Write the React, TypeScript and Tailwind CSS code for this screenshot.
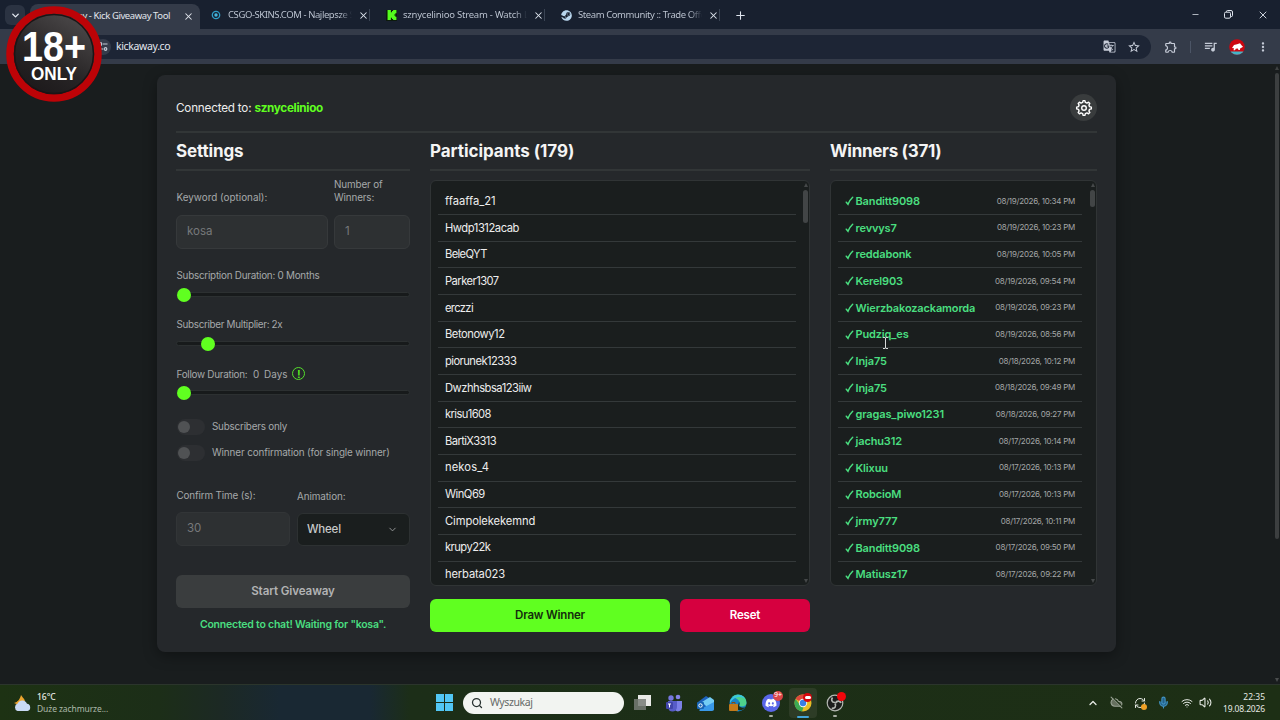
import React from "react";
import { ChevronDown, ChevronUp, CloudOff, Mic, Minus, Plus, RefreshCw, Search, Volume2, Wifi, X } from "lucide-react";
import { FaDiscord, FaSteam } from "react-icons/fa";
import { MdGTranslate, MdMoreVert, MdOutlineExtension, MdQueueMusic, MdStarBorder } from "react-icons/md";
import { SiKick } from "react-icons/si";

const participants = [
  { name: "ffaaffa_21", spacing: "tracking-normal" },
  { name: "Hwdp1312acab", spacing: "tracking-[-0.45px]" },
  { name: "BeleQYT", spacing: "tracking-[-0.65px]" },
  { name: "Parker1307", spacing: "tracking-[-0.55px]" },
  { name: "erczzi", spacing: "tracking-[-0.65px]" },
  { name: "Betonowy12", spacing: "tracking-[-0.45px]" },
  { name: "piorunek12333", spacing: "tracking-[-0.55px]" },
  { name: "Dwzhhsbsa123iiw", spacing: "tracking-[-0.5px]" },
  { name: "krisu1608", spacing: "tracking-[-0.6px]" },
  { name: "BartiX3313", spacing: "tracking-[-0.6px]" },
  { name: "nekos_4", spacing: "tracking-[0.1px]" },
  { name: "WinQ69", spacing: "tracking-[-0.5px]" },
  { name: "Cimpolekekemnd", spacing: "tracking-[-0.1px]" },
  { name: "krupy22k", spacing: "tracking-[-0.55px]" },
  { name: "herbata023", spacing: "tracking-[-0.15px]" },
];

const winners = [
  { name: "Banditt9098", date: "08/19/2026, 10:34 PM" },
  { name: "revvys7", date: "08/19/2026, 10:23 PM" },
  { name: "reddabonk", date: "08/19/2026, 10:05 PM" },
  { name: "Kerel903", date: "08/19/2026, 09:54 PM" },
  { name: "Wierzbakozackamorda", date: "08/19/2026, 09:23 PM" },
  { name: "Pudziq_es", date: "08/19/2026, 08:56 PM" },
  { name: "Inja75", date: "08/18/2026, 10:12 PM" },
  { name: "Inja75", date: "08/18/2026, 09:49 PM" },
  { name: "gragas_piwo1231", date: "08/18/2026, 09:27 PM" },
  { name: "jachu312", date: "08/17/2026, 10:14 PM" },
  { name: "Klixuu", date: "08/17/2026, 10:13 PM" },
  { name: "RobcioM", date: "08/17/2026, 10:13 PM" },
  { name: "jrmy777", date: "08/17/2026, 10:11 PM" },
  { name: "Banditt9098", date: "08/17/2026, 09:50 PM" },
  { name: "Matiusz17", date: "08/17/2026, 09:22 PM" },
];

// outline of an eight-toothed gear around (9, 9)
const gearPoints = Array.from({ length: 8 })
  .flatMap((_, i) =>
    [
      [-14, 5.7],
      [-7, 7.4],
      [7, 7.4],
      [14, 5.7],
    ].map(([offset, r]) => {
      const a = ((i * 45 + offset) * Math.PI) / 180;
      return `${(9 + r * Math.cos(a)).toFixed(2)},${(9 + r * Math.sin(a)).toFixed(2)}`;
    })
  )
  .join(" ");

function Tab({ icon, title, spacing }: { icon: React.ReactNode; title: string; spacing: string }) {
  return (
    <div className="flex w-[175px] items-center pl-[9px] pr-[7px]">
      <div className="flex w-[17px] shrink-0 items-center">{icon}</div>
      <div
        className={`w-[124px] overflow-hidden whitespace-nowrap bg-gradient-to-r from-[#c3cbd8] from-90% to-transparent bg-clip-text text-transparent ${spacing}`}
      >
        {title}
      </div>
      <X className="ml-[6px] shrink-0 text-[#dfe5ee]" size={11} strokeWidth={2.3} />
      <div className="ml-auto h-3 w-px bg-[#3a4454]" />
    </div>
  );
}

function AgeBadge() {
  return (
    <svg className="absolute left-[6px] top-[6px]" width="96" height="96" viewBox="0 0 96 96">
      <defs>
        <linearGradient id="badge" x1="0" y1="1" x2="0.6" y2="0">
          <stop offset="0" stopColor="#171416" />
          <stop offset="0.5" stopColor="#272425" />
          <stop offset="1" stopColor="#4a4748" />
        </linearGradient>
      </defs>
      <circle cx="48" cy="48" r="44" fill="url(#badge)" stroke="#bd0307" strokeWidth="7.5" />
      <circle cx="48" cy="48" r="39.5" fill="none" stroke="#1b1516" strokeWidth="1.5" />
      <text x="16" y="55.3" textLength="64" lengthAdjust="spacingAndGlyphs" fill="#fff" fontSize="43" fontWeight="700" fontFamily="Liberation Sans, sans-serif">18+</text>
      <text x="25" y="74" textLength="46" lengthAdjust="spacingAndGlyphs" fill="#fff" fontSize="19" fontWeight="700" fontFamily="Liberation Sans, sans-serif">ONLY</text>
    </svg>
  );
}

function BrowserBar() {
  return (
    <div className="h-16 bg-[#343b49] font-['Noto_Sans',sans-serif] text-[9.5px]">
      <div className="flex h-[29px] bg-[#18202f]">
        <div className="ml-[5px] mt-[5px] flex h-5 w-5 items-center justify-center rounded-md bg-[#2b3342]">
          <ChevronDown size={11} strokeWidth={3} className="text-[#e4e9f1]" />
        </div>
        <div className="ml-[5px] mt-1 flex w-[170px] items-center rounded-t-lg bg-[#343b49] pb-px text-[#e2e6ed]">
          <div className="ml-[5px] h-3 w-3 rounded-sm bg-[#101512]" />
          <div className="ml-[-7px] flex w-[130px] justify-end whitespace-nowrap tracking-[-0.42px]">KickAway - Kick Giveaway Tool</div>
          <X size={11} strokeWidth={2.3} className="ml-[13px]" />
        </div>
        <div className="flex items-center pl-[2px] pt-px">
          <Tab
            title="CSGO-SKINS.COM - Najlepsze Skiny"
            spacing="tracking-[-0.42px]"
            icon={
              <svg width="10" height="10" viewBox="0 0 10 10">
                <circle cx="5" cy="5" r="3.7" fill="none" stroke="#2f9dc7" strokeWidth="1.3" />
                <circle cx="5" cy="5" r="1.7" fill="#45b6dd" />
              </svg>
            }
          />
          <Tab
            title="sznycelinioo Stream - Watch Live on Kick"
            spacing="tracking-[-0.22px]"
            icon={
              <div className="flex h-[11px] w-[11px] items-center justify-center bg-[#0c1a0c]">
                <SiKick size={10} className="text-[#54fc1e]" />
              </div>
            }
          />
          <Tab
            title="Steam Community :: Trade Offers"
            spacing="tracking-[-0.42px]"
            icon={<FaSteam size={11} className="text-[#b9d6ee]" />}
          />
          <Plus size={13} className="ml-[7px] text-[#dfe5ee]" />
        </div>
        <div className="ml-auto flex items-center gap-[24px] pr-[11px] text-[#dfe5ee]">
          <Minus size={9} />
          <svg width="9" height="9" viewBox="0 0 9 9" fill="none" stroke="currentColor">
            <rect x="0.5" y="2.2" width="6" height="6" rx="1.3" />
            <path d="M2.5 2V1.5a1 1 0 0 1 1-1H7a1.5 1.5 0 0 1 1.5 1.5V5.5a1 1 0 0 1-1 1H7" />
          </svg>
          <X size={12} strokeWidth={1.8} />
        </div>
      </div>
      <div className="flex h-[35px] items-center text-[#c6ccd8]">
        <div className="ml-[84px] flex h-[24px] w-[1067px] items-center rounded-full bg-[#1d2535]">
          <div className="ml-[11px] flex h-4 w-4 items-center justify-center rounded-full bg-[#343c4b]">
            <svg width="10" height="9" viewBox="0 0 10 9" fill="none" stroke="currentColor" strokeWidth="1.2">
              <path d="M5 2h4.5M0.5 7H5" />
              <circle cx="2.5" cy="2" r="1.3" />
              <circle cx="7.5" cy="7" r="1.3" />
            </svg>
          </div>
          <div className="ml-[5px] text-[10.5px] tracking-[-0.35px] text-[#e4e7ee]">kickaway.co</div>
          <MdGTranslate size={13} className="ml-auto" />
          <MdStarBorder size={14} className="ml-[11px] mr-[10px]" />
        </div>
        <MdOutlineExtension size={14} className="ml-[13px]" />
        <div className="ml-[12px] h-3 w-px bg-[#4c5566]" />
        <MdQueueMusic size={15} className="ml-[12px]" />
        <svg className="ml-[11px]" width="16" height="16" viewBox="0 0 16 16">
          <clipPath id="avatar"><circle cx="8" cy="8" r="7.8" /></clipPath>
          <g clipPath="url(#avatar)">
            <path fill="#cc0710" d="M0 0h16v16H0z" />
            <path fill="#42b5c8" d="M0 12.5h16V16H0z" />
            <path fill="#fff" d="M3 9l2-3 3-.7 3-1 1.5 2 1.5 1.5-1.5 1-1 .2-.7 2H9.5l-.7-1.5-2 .3-.8 1.5H4.5L5 9.2z" />
          </g>
        </svg>
        <MdMoreVert size={14} className="ml-[11px]" />
      </div>
    </div>
  );
}

function Slider({ offset = "ml-0" }: { offset?: string }) {
  return (
    <div className="flex h-[14px] items-center">
      <div className="flex h-[5px] w-full items-center rounded-full border border-[#2c3031] bg-[#171a1b]">
        <div className={`h-[14px] w-[14px] shrink-0 rounded-full bg-[#60ff20] ${offset}`} />
      </div>
    </div>
  );
}

function Toggle({ label, spacing }: { label: string; spacing: string }) {
  return (
    <div className="flex h-[26px] items-center">
      <div className="ml-px flex h-4 w-7 items-center rounded-full bg-[#2d2f32] pl-[1px]">
        <div className="h-3 w-3 rounded-full bg-[#505254]" />
      </div>
      <span className={`ml-[7px] ${spacing}`}>{label}</span>
    </div>
  );
}

function Settings() {
  return (
    <div className="flex w-[234px] flex-col text-[9.9px] text-[#a6a8aa]">
      <h2 className="h-[38px] border-b-2 border-[#323637] pt-[5px] text-[17px] font-bold leading-[26px] tracking-[-0.15px] text-[#f4f4f4]">Settings</h2>
      <div className="flex items-end gap-[6px] pt-[7px] leading-[13.3px]">
        <div className="w-[152px] pl-[0.5px]">Keyword (optional):</div>
        <div className="w-[70px] tracking-[-0.15px]">Number of Winners:</div>
      </div>
      <div className="mt-[10px] flex gap-[6px] text-[11.5px] text-[#77797b]">
        <div className="flex h-[34px] w-[152px] items-center rounded-md border border-[#36393b] bg-[#2d3032] pl-[10px]">kosa</div>
        <div className="flex h-[34px] w-[76px] items-center rounded-md border border-[#36393b] bg-[#2d3032] pl-[10px]">1</div>
      </div>
      <div className="mt-[19px] h-[14px] pl-[0.5px] leading-[14px] tracking-[-0.25px]">Subscription Duration: 0 Months</div>
      <div className="mt-[6px]"><Slider /></div>
      <div className="mt-[15px] h-[14px] pl-[0.5px] leading-[14px] tracking-[-0.32px]">Subscriber Multiplier: 2x</div>
      <div className="mt-[6px]"><Slider offset="ml-[24px]" /></div>
      <div className="mt-[15px] flex h-[16px] items-center pl-[0.5px] leading-[16px]">
        <span className="tracking-[-0.27px]">Follow Duration:</span>
        <span className="ml-[5.5px]">0</span>
        <span className="ml-[5px]">Days</span>
        <div className="ml-[5px] flex h-[13px] w-[13px] items-center justify-center rounded-full border border-[#55df2b] text-[10px] font-semibold leading-none text-[#60ff20]">!</div>
      </div>
      <div className="mt-[4px]"><Slider /></div>
      <div className="mt-[14px]">
        <Toggle label="Subscribers only" spacing="tracking-[-0.22px]" />
        <Toggle label="Winner confirmation (for single winner)" spacing="tracking-[-0.13px]" />
      </div>
      <div className="mt-[22px] flex gap-[7px]">
        <div className="w-[114px]">
          <div className="h-[24px] pl-[0.5px] leading-[14px] tracking-[-0.15px]">Confirm Time (s):</div>
          <div className="flex h-[34px] items-center rounded-md border border-[#323537] bg-[#2d3032] pb-px pl-[10px] pt-[2px] text-[11.5px] text-[#77797b]">30</div>
        </div>
        <div className="w-[113px]">
          <div className="h-[25px] pt-px leading-[14px] tracking-[-0.1px]">Animation:</div>
          <div className="flex h-[33px] items-center justify-between rounded-md border border-[#2d3132] bg-[#1a1e1e] pl-[9px] pr-[11px] pt-px text-[11.5px] font-medium tracking-[-0.2px] text-[#c8caca]">
            Wheel
            <ChevronDown size={11} className="text-[#9b9d9e]" />
          </div>
        </div>
      </div>
      <button className="mt-[29px] h-[33px] rounded-md bg-[#3a3d3e] pt-[2px] text-[11.6px] font-semibold tracking-[-0.1px] text-[#b2b3b4]">Start Giveaway</button>
      <p className="mt-[9px] text-center text-[10.5px] font-semibold leading-[15px] tracking-[-0.22px] text-[#4ade80]">Connected to chat! Waiting for "kosa".</p>
    </div>
  );
}

function Scrollbar({ thumb }: { thumb: string }) {
  return (
    <div className="flex w-[7px] flex-col items-center justify-between py-[2px]">
      <div className="flex flex-col items-center">
        <div className="h-0 w-0 border-x-[2.5px] border-b-4 border-x-transparent border-b-[#454849]" />
        <div className={`mt-[3px] w-[5px] rounded-full bg-[#424546] ${thumb}`} />
      </div>
      <div className="h-0 w-0 border-x-[2.5px] border-t-4 border-x-transparent border-t-[#454849]" />
    </div>
  );
}

function Participants() {
  return (
    <div className="w-[380px]">
      <h2 className="h-[38px] border-b-2 border-[#323637] pt-[5px] text-[17px] font-bold leading-[26px] tracking-[-0.05px] text-[#f4f4f4]">Participants (179)</h2>
      <div className="mt-[9px] flex h-[406px] overflow-hidden rounded-md border border-[#303435] bg-[#1a1e1e]">
        <ul className="ml-[7px] mr-[6px] flex-1 pt-[7.5px] text-[11.2px] text-[#ededed]">
          {participants.map((p) => (
            <li key={p.name} className={`flex h-[26.67px] items-center border-b border-[#34393a] pl-[7px] ${p.spacing}`}>
              {p.name}
            </li>
          ))}
        </ul>
        <Scrollbar thumb="h-[33px]" />
      </div>
      <div className="mt-[13px] flex h-[33px] gap-[10px] text-[11.5px] font-semibold tracking-[-0.2px]">
        <button className="w-[240px] rounded-md bg-[#60ff20] pt-px text-[#142c0d]">Draw Winner</button>
        <button className="w-[130px] rounded-md bg-[#d6003f] pt-px text-white">Reset</button>
      </div>
    </div>
  );
}

function Winners() {
  return (
    <div className="w-[267px]">
      <h2 className="h-[38px] border-b-2 border-[#323637] pt-[5px] text-[17px] font-bold leading-[26px] tracking-[-0.3px] text-[#f4f4f4]">Winners (371)</h2>
      <div className="mt-[9px] flex h-[406px] overflow-hidden rounded-md border border-[#303435] bg-[#1a1e1e]">
        <ul className="ml-[7px] mr-[7px] flex-1 pt-[7.5px]">
          {winners.map((w, i) => (
            <li key={i} className="flex h-[26.67px] items-center border-b border-[#34393a] px-[7px]">
              <svg width="9" height="10" viewBox="0 0 9 10" fill="none" stroke="#4ade80" strokeWidth="1.5" strokeLinecap="round">
                <path d="M1.3 6.2 3 8.3Q4.600 4 7.700 1.200" />
              </svg>
              <span className="ml-[1.5px] whitespace-nowrap text-[11px] font-semibold tracking-[-0.14px] text-[#4ade80]">{w.name}</span>
              <span className="ml-auto whitespace-nowrap pb-px text-[8px] tracking-[-0.25px] text-[#a4a6a7]">{w.date}</span>
            </li>
          ))}
        </ul>
        <Scrollbar thumb="h-[17px]" />
      </div>
    </div>
  );
}

function Taskbar() {
  return (
    <div className="flex h-9 items-center border-t border-[#2b352c] bg-[linear-gradient(90deg,#1d3213_0px,#1c2e18_160px,#1c2924_220px,#192833_280px,#192833_370px,#1c2e18_410px,#1d2f15_1280px)] font-['Noto_Sans',sans-serif] text-[#e6eae4]">
      <svg className="ml-[13px]" width="19" height="18" viewBox="0 0 19 18">
        <path fill="#eda52f" d="M8 1c1 2 3 3 4 6l-6 4-5-2c4-1 6-4 7-8z" />
        <path fill="#c9daf5" d="M4.5 17a4 4 0 0 1 .2-7.5A5 5 0 0 1 14 9.8a3.7 3.7 0 0 1 .6 7.2z" />
      </svg>
      <div className="ml-[5px] w-[393px] text-[8.5px] leading-[12px]">
        <div className="font-medium">16°C</div>
        <div className="tracking-[-0.1px] text-[#adb9aa]">Duże zachmurze...</div>
      </div>
      <svg className="ml-[6px] shrink-0" width="17" height="17" viewBox="0 0 17 17" fill="#52c7f5">
        <path d="M0 0h8v8H0zM9 0h8v8H9zM0 9h8v8H0zM9 9h8v8H9z" />
      </svg>
      <div className="ml-[10px] flex h-[22px] w-[161px] shrink-0 items-center rounded-full bg-[#f2f4f1] pl-[8px] text-[10.5px] tracking-[-0.4px] text-[#666a68]">
        <Search size={12} strokeWidth={2.5} className="mr-[7px] text-[#26302f]" />
        Wyszukaj
      </div>
      <div className="ml-[9px] flex items-center gap-[14px]">
        <svg width="18" height="18" viewBox="0 0 18 18">
          <path fill="#e9eae7" d="M5 1h13v11H5z" />
          <path fill="#777b75" fillOpacity=".85" d="M1 5h12v11H1z" />
        </svg>
        <svg width="18" height="18" viewBox="0 0 18 18">
          <circle cx="6" cy="4" r="2.7" fill="#7576df" />
          <circle cx="13" cy="3" r="2.3" fill="#8382e6" />
          <path fill="#7c80e6" d="M10 7h7v6a4 4 0 0 1-7 3z" />
          <path fill="#575cc7" d="M3 7h9v6a4.5 4.5 0 0 1-9 0z" />
          <rect x="1" y="8" width="7" height="7" rx="1" fill="#4145a9" />
          <path d="M3 10h3M4.5 10v3.5" stroke="#fff" strokeWidth="1" />
        </svg>
        <svg width="18" height="18" viewBox="0 0 18 18">
          <path fill="#1d62bd" d="m1 8 8-6 8 5v9H3z" />
          <path fill="#74cdf5" d="m5 8 8-5 4 3v4l-6 4z" />
          <path fill="#3999e9" d="m2 16 15-8v7a2 2 0 0 1-2 2H3z" />
          <rect y="8" width="7" height="7" rx="1" fill="#1765b5" />
          <circle cx="3.5" cy="11.5" r="1.7" fill="none" stroke="#fff" />
        </svg>
        <svg width="18" height="18" viewBox="0 0 18 18">
          <circle cx="9" cy="9" r="8.5" fill="#1783c6" />
          <path fill="#4ed28c" d="M3 3a8.5 8.5 0 0 1 14.5 6c0 3-4 4-7 3 2-4-2-8-7.5-9z" />
          <path fill="#3ac5e2" d="M1 7C4 0 14-1 16 5 12 1 4 3 1 9z" />
          <path fill="#1d2f15" d="M10 8c1 1 0 3 0 4 2 2 5 2 6 1-2 4-6 4-8 2z" />
          <rect y="10" width="9" height="7" rx="1" fill="#c47a19" />
          <path d="M3 10V8.5h3V10" fill="none" stroke="#864d0f" />
        </svg>
        <div className="relative ml-px flex h-[18px] w-[18px] items-center justify-center rounded-full bg-[#5966e8]">
          <FaDiscord size={12} className="text-white" />
          <div className="absolute -right-[3px] -top-[3px] flex h-[10px] w-[10px] items-center justify-center rounded-full bg-[#db4548] text-[7px] text-white">9+</div>
          <div className="absolute -bottom-[5px] h-[2px] w-1 rounded-full bg-[#a7ada3]" />
        </div>
        <div className="relative -mx-[5px] flex h-[30px] w-[28px] items-center justify-center rounded bg-[#2d3c26]">
          <svg width="18" height="18" viewBox="0 0 18 18">
            <circle cx="9" cy="9" r="8.5" fill="#e9bd25" />
            <path fill="#dd493d" d="M9 9 1.5 5A8.5 8.5 0 0 1 16.5 5z" />
            <path fill="#3daa54" d="m1.5 5 5.5 7 2.5 1.5-1.5 4A8.5 8.5 0 0 1 1.5 5z" />
            <circle cx="9" cy="9" r="4.2" fill="#f4f5f3" />
            <circle cx="9" cy="9" r="3.2" fill="#387fe6" />
          </svg>
          <div className="absolute right-[5px] top-[5px] flex h-[9px] w-[9px] items-center justify-center rounded-full bg-[#d8070e]">
            <div className="h-[3px] w-[6px] rounded-full bg-white" />
          </div>
          <div className="absolute bottom-0 h-[2px] w-3 rounded-full bg-[#43a6dc]" />
        </div>
        <div className="relative flex h-[18px] w-[18px] items-center justify-center">
          <svg width="18" height="18" viewBox="0 0 18 18" fill="none" stroke="#b4b8b2">
            <circle cx="9" cy="9" r="7.8" fill="#1c1e1c" strokeWidth="1.2" />
            <path strokeWidth="1.7" d="M9 8.5C5.5 8.5 5 5.5 6.5 3.5M9.5 9c1.7-3 4.8-2.2 5.5 0M9 9.5c1.8 3-.5 5.3-3.2 4.7" />
          </svg>
          <div className="absolute -right-[2px] -top-[2px] h-[9px] w-[9px] rounded-full bg-[#f1060b]" />
          <div className="absolute -bottom-[5px] h-[2px] w-1 rounded-full bg-[#a7ada3]" />
        </div>
      </div>
      <div className="ml-auto flex items-center pr-[15px]">
        <ChevronUp size={12} strokeWidth={2.6} />
        <CloudOff size={13} className="ml-[11px] fill-[#66705f] text-[#99a294]" />
        <div className="relative ml-[11px]">
          <RefreshCw size={12} />
          <div className="absolute -bottom-px -right-px h-[6px] w-[6px] rounded-full bg-[#efa126]" />
        </div>
        <Mic size={13} className="ml-[11px] fill-[#24608a] text-[#4295c3]" />
        <Wifi size={12} className="ml-[11px]" />
        <Volume2 size={13} className="ml-[6px]" />
        <div className="ml-[9px] w-[44px] whitespace-nowrap text-right text-[8.5px] leading-[12px]">
          <div>22:35</div>
          <div className="tracking-[-0.15px]">19.08.2026</div>
        </div>
      </div>
    </div>
  );
}

export default function App() {
  return (
    <div className="relative h-[720px] w-[1280px] overflow-hidden bg-[#191d1e]">
      <BrowserBar />
      <div className="flex h-[620px] font-[Inter,sans-serif]">
        <div className="ml-[157px] mt-[11px] h-[577px] w-[959px] rounded-lg bg-[#25282b] px-[19px] pt-5 shadow-[0_4px_14px_rgba(0,0,0,0.35)]">
          <div className="flex h-[38px] justify-between border-b-2 border-[#323637]">
            <div className="pt-[4px] text-[11.7px] leading-[18px] tracking-[-0.2px] text-[#ececec]">
              Connected to: <span className="font-bold tracking-[-0.3px] text-[#60ff20]">sznycelinioo</span>
            </div>
            <div className="-mt-px flex h-[27px] w-[27px] items-center justify-center rounded-full bg-[#393c3d]">
              <svg width="18" height="18" viewBox="0 0 18 18" fill="none" stroke="#fff" strokeWidth="1.4" strokeLinejoin="round">
                <polygon points={gearPoints} />
                <circle cx="9" cy="9" r="2.3" />
              </svg>
            </div>
          </div>
          <div className="flex gap-5">
            <Settings />
            <Participants />
            <Winners />
          </div>
        </div>
        <div className="ml-auto flex w-[6px] flex-col items-center justify-between py-[2px]">
          <div className="flex flex-col items-center">
            <div className="h-0 w-0 border-x-2 border-b-4 border-x-transparent border-b-[#3f4243]" />
            <div className="mt-[3px] h-[466px] w-[4px] rounded-full bg-[#3c3f40]" />
          </div>
          <div className="h-0 w-0 border-x-2 border-t-4 border-x-transparent border-t-[#4a4d4e]" />
        </div>
      </div>
      <Taskbar />
      <AgeBadge />
      {/* text cursor over the winners list */}
      <svg className="absolute left-[882px] top-[337px]" width="7" height="12" viewBox="0 0 7 12" fill="none" stroke="#d6d8d8">
        <path d="M1 .5h2l.5.5.5-.5h2M3.5 1v10M1 11.5h2l.5-.5.5.5h2" />
      </svg>
    </div>
  );
}
